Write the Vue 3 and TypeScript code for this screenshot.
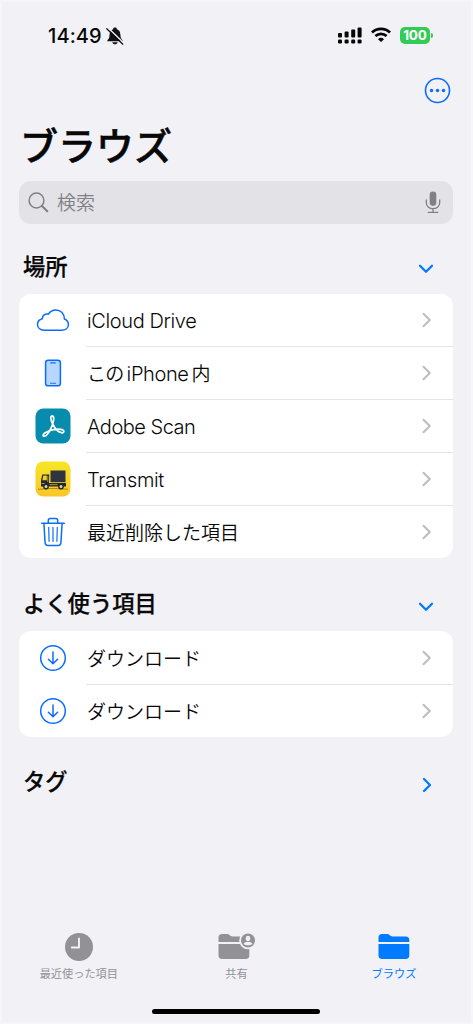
<script setup lang="ts">
interface Row {
  label: string
  icon: 'cloud' | 'phone' | 'adobe' | 'transmit' | 'trash' | 'download'
  cls: string
}

const places: Row[] = [
  { label: 'iCloud Drive', icon: 'cloud', cls: 'latin icloud' },
  { label: 'このiPhone内', icon: 'phone', cls: 'mixed' },
  { label: 'Adobe Scan', icon: 'adobe', cls: 'latin adobe' },
  { label: 'Transmit', icon: 'transmit', cls: 'latin transmit' },
  { label: '最近削除した項目', icon: 'trash', cls: 'jp' },
]
const favorites: Row[] = [
  { label: 'ダウンロード', icon: 'download', cls: 'jp' },
  { label: 'ダウンロード', icon: 'download', cls: 'jp' },
]
const sections = [
  { title: '場所', rows: places, cls: 'places' },
  { title: 'よく使う項目', rows: favorites, cls: 'favorites' },
]
</script>

<template>
  <main class="screen">
    <header class="status">
      <span class="time">14:49</span>
      <svg class="bell" width="18" height="18" viewBox="0 0 18 18">
        <path d="M1.2 14.2c0-1.5 2-2 2.2-4.4C3.6 5.500 4.300 3 7.100 2.200 7.300.900 8 .6 9 .6s1.700.3 1.900 1.600c2.800.8 3.500 3.300 3.700 7.600.2 2.400 2.200 2.900 2.200 4.400z" fill="#111" />
        <path d="M6.300 15.300h5.400c-.5 1.500-1.400 2-2.700 2s-2.200-.5-2.700-2z" fill="#111" />
        <path d="M1.900.7 18 16.200" stroke="#f2f1f6" stroke-width="1.400" />
        <path d="M.8 1.700 16.800 17.200" stroke="#111" stroke-width="1.200" stroke-linecap="round" />
      </svg>
      <svg class="signal" width="25" height="18" viewBox="0 0 25 18" fill="#050505">
        <rect x="0" y="6" width="4" height="4.500" rx="1" /><rect x="6.600" y="4.500" width="4" height="6" rx="1" />
        <rect x="13.200" y="2.500" width="4" height="8" rx="1" /><rect x="19.600" y="0.500" width="4" height="10" rx="1" />
        <rect x="0" y="12.500" width="4" height="4" rx="1.300" /><rect x="6.600" y="12.500" width="4" height="4" rx="1.300" />
        <rect x="13.200" y="12.500" width="4" height="4" rx="1.300" /><rect x="19.600" y="12.500" width="4" height="4" rx="1.300" />
      </svg>
      <svg class="wifi" width="20" height="16" viewBox="0 0 20 16" fill="none" stroke="#050505" stroke-width="2.700">
        <path d="M1 5.500a13 13 0 0 1 18 0" /><path d="M4.400 9.100a8.200 8.200 0 0 1 11.200 0" />
        <path d="M10 15 7 12.200a4.400 4.400 0 0 1 6 0z" fill="#050505" stroke="none" />
      </svg>
      <span class="battery">100</span>
      <i class="battery-tip" />
    </header>

    <div class="toolbar">
      <svg width="27" height="27" viewBox="0 0 27 27">
        <circle cx="13.500" cy="13.500" r="12" fill="none" stroke="#0a6cff" stroke-width="1.600" />
        <g fill="#0a6cff"><circle cx="7.500" cy="13.500" r="1.750" /><circle cx="13.500" cy="13.500" r="1.750" /><circle cx="19.500" cy="13.500" r="1.750" /></g>
      </svg>
    </div>

    <h1>ブラウズ</h1>

    <div class="search">
      <svg width="21" height="21" viewBox="0 0 21 21" fill="none" stroke="#808085">
        <circle cx="8.500" cy="8.500" r="7.400" stroke-width="1.500" /><path d="m14 14 5.300 5.300" stroke-width="2" stroke-linecap="round" />
      </svg>
      <span>検索</span>
      <svg class="mic" width="16" height="23" viewBox="0 0 16 23">
        <rect x="4.700" y=".5" width="6.600" height="14.400" rx="3.300" fill="#808085" />
        <path d="M1.300 9v2.700a6.700 6 0 0 0 13.400 0V9M8 17.700v3.600M3.200 21.300h9.600" fill="none" stroke="#808085" stroke-width="1.300" stroke-linecap="round" />
      </svg>
    </div>

    <section v-for="s in sections" :key="s.title" :class="s.cls">
      <div class="head">
        <h2>{{ s.title }}</h2>
        <svg width="16" height="10" viewBox="0 0 16 10"><path d="m2 1.700 6 6 6-6" fill="none" stroke="#007aff" stroke-width="2.300" stroke-linecap="round" stroke-linejoin="round" /></svg>
      </div>
      <ul class="card">
        <li v-for="(r, i) in s.rows" :key="i">
          <span class="icon">
            <svg v-if="r.icon === 'cloud'" width="34" height="24" viewBox="0 0 34 24">
              <path d="M8.100 22.200H25.800c3.700 0 6.600-2.200 6.600-5.700 0-2.800-1.500-4.500-4-5.500C28.500 5.700 24.700 1.900 19.900 1.900c-3.300 0-6 1.800-7.500 4.300-3.200-.7-6 1.200-6.100 4.500-2.900.8-4.800 2.800-4.800 5.600 0 3.400 2.700 5.900 6.600 5.900z" fill="none" stroke="#0a6cff" stroke-width="1.500" stroke-linejoin="round" />
            </svg>
            <svg v-else-if="r.icon === 'phone'" width="18" height="28" viewBox="0 0 18 28">
              <rect x="1.600" y="1.200" width="14.800" height="25.600" rx="2.600" fill="#b7d7ff" stroke="#0a6cff" stroke-width="1.500" />
              <path d="M6.800 3.900h4.400" stroke="#0a6cff" stroke-width="1.400" stroke-linecap="round" /><path d="M6 24.300h6" stroke="#0a6cff" stroke-width=".9" />
            </svg>
            <svg v-else-if="r.icon === 'adobe'" width="36" height="36" viewBox="0 0 36 36">
              <rect x=".5" y=".5" width="35" height="35" rx="7.800" fill="#078cae" />
              <path d="M17.200 7.900c-2.300.2-1.400 4.700.5 8.200 2 3.900 5.400 8 8.800 8.600 2.600.4 3.200-2.100 1-3-4.600-1.800-13.500.7-17.700 3.300-2.500 1.600-1.900 3.600-.3 3.200 3.600-.8 8.300-10.200 9.100-16.100.3-2.600 0-4.200-1.400-4.200z" fill="none" stroke="#fff" stroke-width="1.750" stroke-linejoin="round" />
            </svg>
            <svg v-else-if="r.icon === 'transmit'" width="36" height="36" viewBox="0 0 36 36">
              <defs><linearGradient id="sun" x2="0" y2="1"><stop stop-color="#f7e625" /><stop offset="1" stop-color="#fbc528" /></linearGradient></defs>
              <rect x=".5" y=".5" width="35" height="35" rx="7.800" fill="url(#sun)" />
              <path d="M3 28.300q15-1.900 30 0" fill="none" stroke="#8d7620" stroke-width=".8" />
              <path d="M15.500 9.500h15v11.700h-15z" fill="#30343f" /><path d="M14 22h17v3.500H6V19l1.300-5.500h7z" fill="#202735" />
              <path d="M8.300 14.600h3.500v4.600H7.300z" fill="#ecd027" /><path d="M12.800 15v6M6.500 22.500h3.200M14.500 23.700h8" stroke="#ecd027" stroke-width=".7" />
              <circle cx="11" cy="25.500" r="2.200" fill="#e8d79a" stroke="#202735" stroke-width="1.400" /><circle cx="26" cy="25.500" r="2.200" fill="#e8d79a" stroke="#202735" stroke-width="1.400" />
            </svg>
            <svg v-else-if="r.icon === 'trash'" width="26" height="30" viewBox="0 0 26 30" fill="none" stroke="#0a6cff" stroke-width="1.500" stroke-linecap="round" stroke-linejoin="round">
              <path d="M1.700 6.300h22.600M8.300 6V3.600c0-1.300.8-2.100 2.100-2.100h5.200c1.300 0 2.100.8 2.100 2.100V6M3.900 6.500l1.200 19.300c.1 1.700 1.100 2.700 2.800 2.700h10.200c1.700 0 2.700-1 2.800-2.700l1.200-19.300" />
              <path d="m8.700 10.300.4 14M13 10.300v14M17.300 10.300l-.4 14" stroke-width="1.200" />
            </svg>
            <svg v-else width="28" height="28" viewBox="0 0 28 28" fill="none" stroke="#0a6cff" stroke-width="1.500" stroke-linecap="round" stroke-linejoin="round">
              <circle cx="14" cy="14" r="12.300" /><path d="M14 8v11.600M9.400 15.200l4.600 4.600 4.600-4.600" />
            </svg>
          </span>
          <div class="body">
            <span v-if="r.cls === 'mixed'" class="label mixed"><span class="kana">この</span><span class="latin phone">iPhone</span><span class="kana">内</span></span>
            <span v-else class="label" :class="r.cls">{{ r.label }}</span>
            <svg class="chev" width="10" height="16" viewBox="0 0 10 16"><path d="m1.500 1.800 6.300 6.200-6.300 6.200" fill="none" stroke="#bdbdc0" stroke-width="2" stroke-linecap="round" stroke-linejoin="round" /></svg>
          </div>
        </li>
      </ul>
    </section>

    <div class="head tags">
      <h2>タグ</h2>
      <svg width="10" height="16" viewBox="0 0 10 16"><path d="m2 2 6 6-6 6" fill="none" stroke="#007aff" stroke-width="2.300" stroke-linecap="round" stroke-linejoin="round" /></svg>
    </div>

    <nav>
      <div class="tab">
        <svg width="30" height="30" viewBox="0 0 30 30"><circle cx="15" cy="15" r="14" fill="#919196" /><path d="M15 6.500v9H7.800" fill="none" stroke="#f2f1f6" stroke-width="1.900" stroke-linecap="round" stroke-linejoin="round" /></svg>
        <span>最近使った項目</span>
      </div>
      <div class="tab">
        <svg width="40" height="30" viewBox="0 0 40 30">
          <g fill="#919196"><path d="M2.500 10V5.500C2.500 3.300 3.800 2 6 2h5c2.500 0 3 2.400 5.600 2.400h13.200c2.200 0 3.500 1.300 3.500 3.500V10z" /><path d="M2.500 12h30.800v11.500c0 2.200-1.300 3.500-3.500 3.500H6c-2.200 0-3.500-1.300-3.500-3.500z" /></g>
          <circle cx="32" cy="8.500" r="8.800" fill="#f2f1f6" /><circle cx="32" cy="8.500" r="7" fill="#919196" />
          <ellipse cx="32" cy="6.500" rx="2.300" ry="2.800" fill="#f2f1f6" /><path d="M27.500 12c.7-1.600 2.400-1.900 4.500-1.900s3.800.3 4.500 1.900c-2.200 1.700-6.800 1.700-9 0z" fill="#f2f1f6" />
        </svg>
        <span>共有</span>
      </div>
      <div class="tab active">
        <svg width="34" height="30" viewBox="0 0 34 30" fill="#007aff"><path d="M1.500 10V5.500C1.500 3.300 2.800 2 5 2h5c2.500 0 3 2.400 5.600 2.400h13.200c2.200 0 3.500 1.300 3.500 3.500V10z" /><path d="M1.500 12h30.800v11.500c0 2.200-1.300 3.500-3.500 3.500H5c-2.200 0-3.500-1.300-3.500-3.500z" /></svg>
        <span>ブラウズ</span>
      </div>
    </nav>
    <div class="home" />
  </main>
</template>

<style>
body { margin: 0; background: #f2f1f6; }
</style>

<style scoped>
* { box-sizing: border-box; }
.screen { width: 473px; height: 1024px; overflow: hidden; background: #f2f1f6; box-shadow: inset 0 0 0 2px #f6f5fa; color: #080808; font-family: Inter, "Noto Sans CJK JP", sans-serif; display: flex; flex-direction: column; }
svg { display: block; flex: none; }
.status { height: 70px; padding: 1px 0 0 48px; display: flex; align-items: center; flex: none; }
.time { width: 55px; font-size: 20px; font-weight: 500; line-height: 24px; letter-spacing: .1px; white-space: nowrap; }
.bell { margin-left: 3px; }
.signal { margin-left: 214px; }
.wifi { margin: 0 0 2px 8px; }
.battery { margin-left: 9px; width: 30px; height: 17px; border-radius: 5px; background: #30cc55; color: #fff; font-size: 13.500px; font-weight: 700; line-height: 17px; letter-spacing: -.1px; text-align: center; }
.battery-tip { width: 2px; height: 5px; margin-left: 1px; border-radius: 0 2px 2px 0; background: #30cc55; }
.toolbar { height: 42px; padding: 7px 0 0 424px; flex: none; }
h1 { margin: 8px 0 0 20px; height: 53px; line-height: 53px; font-size: 38px; font-weight: 500; -webkit-text-stroke: .5px #080808; flex: none; }
.search { margin: 8px 20px 0 19px; height: 43px; flex: none; border-radius: 12px; background: #e3e2e7; color: #808085; display: flex; align-items: center; padding: 0 12px 0 9px; font-size: 19px; font-weight: 350; }
.search span { margin: 3px 0 0 8px; line-height: 28px; }
.mic { margin-left: auto; }
.head { display: flex; align-items: center; justify-content: space-between; height: 70px; padding: 0 39px 0 23px; flex: none; }
.head svg { margin-top: 5px; }
h2 { margin: 0; font-size: 22.300px; line-height: 32px; font-weight: 500; -webkit-text-stroke: .25px #080808; }
.places .head { padding-top: 15px; }
.favorites .head { height: 73px; padding-top: 19px; }
.card { list-style: none; margin: 0 20px 0 19px; padding: 0; background: #fff; border-radius: 12px; }
li { display: flex; height: 53px; }
li:last-child { height: 52px; }
.favorites li:first-child { height: 54px; }
.icon { width: 67px; display: flex; align-items: center; justify-content: center; padding-bottom: 1px; }
.body { flex: 1; display: flex; align-items: center; justify-content: space-between; padding: 1px 21px 0 1px; border-bottom: 1px solid #e4e4e6; }
li:last-child .body { border-bottom: 0; }
.label { font-size: 19px; line-height: 28px; white-space: nowrap; display: flex; align-items: center; }
.jp { font-weight: 350; padding-top: 3px; }
.kana { font-weight: 350; padding-top: 2px; }
.mixed .kana:first-child { letter-spacing: -.7px; }
.latin { font-size: 20px; font-weight: 350; letter-spacing: -.38px; padding-top: 1px; }
.adobe { letter-spacing: -.5px; }
.phone { margin: 0 3px 0 3px; }
.chev { margin-bottom: 1px; }
.tags { height: 54px; margin-top: 18px; padding-right: 41px; }
nav { margin-top: auto; height: 93px; display: flex; flex: none; }
.tab { width: 157.600px; display: flex; flex-direction: column; align-items: center; color: #919196; font-size: 11.200px; line-height: 16px; }
.tab span { margin-top: 4px; }
.active { color: #007aff; }
.home { width: 168px; height: 5.500px; margin: -16.500px 0 10px 152px; flex: none; border-radius: 3px; background: #000; }
</style>
